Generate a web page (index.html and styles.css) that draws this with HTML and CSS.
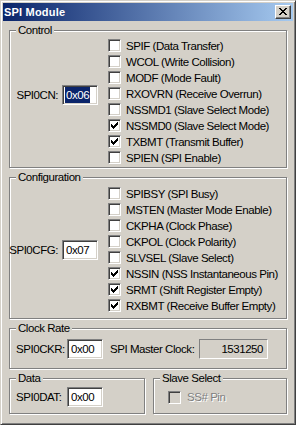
FILE: index.html
```html
<!DOCTYPE html>
<html lang="en">
<head>
    <meta charset="UTF-8">
    <title>SPI Module</title>
    <link rel="stylesheet" href="styles.css">
</head>
<body>
    <div class="window">
        <div class="titlebar">
            <span class="title">SPI Module</span>
            <span class="close-btn">
                <svg width="8" height="7" viewBox="0 0 8 7" shape-rendering="crispEdges">
                    <path d="M0 0h2v1h-2zM6 0h2v1h-2zM1 1h2v1h-2zM5 1h2v1h-2zM2 2h4v1h-4zM3 3h2v1h-2zM2 4h4v1h-4zM1 5h2v1h-2zM5 5h2v1h-2zM0 6h2v1h-2zM6 6h2v1h-2z" fill="#000"/>
                </svg>
            </span>
        </div>

        <div class="dialog">
            <!-- Control register -->
            <div class="group group-control">
                <span class="group-title">Control</span>
                <div class="reg reg-raised">
                    <span class="reg-label">SPI0CN:</span>
                    <span class="edit"><span class="selected">0x06</span></span>
                </div>
                <ul class="bits">
                    <li><span class="check"></span>SPIF (Data Transfer)</li>
                    <li><span class="check"></span>WCOL (Write Collision)</li>
                    <li><span class="check"></span>MODF (Mode Fault)</li>
                    <li><span class="check"></span>RXOVRN (Receive Overrun)</li>
                    <li><span class="check"></span>NSSMD1 (Slave Select Mode)</li>
                    <li><span class="check checked"></span>NSSMD0 (Slave Select Mode)</li>
                    <li><span class="check checked"></span>TXBMT (Transmit Buffer)</li>
                    <li><span class="check"></span>SPIEN (SPI Enable)</li>
                </ul>
            </div>

            <!-- Configuration register -->
            <div class="group group-config">
                <span class="group-title">Configuration</span>
                <div class="reg">
                    <span class="reg-label">SPI0CFG:</span>
                    <span class="edit">0x07</span>
                </div>
                <ul class="bits">
                    <li><span class="check"></span>SPIBSY (SPI Busy)</li>
                    <li><span class="check"></span>MSTEN (Master Mode Enable)</li>
                    <li><span class="check"></span>CKPHA (Clock Phase)</li>
                    <li><span class="check"></span>CKPOL (Clock Polarity)</li>
                    <li><span class="check"></span>SLVSEL (Slave Select)</li>
                    <li><span class="check checked"></span>NSSIN (NSS Instantaneous Pin)</li>
                    <li><span class="check checked"></span>SRMT (Shift Register Empty)</li>
                    <li><span class="check checked"></span>RXBMT (Receive Buffer Empty)</li>
                </ul>
            </div>

            <div class="group group-clock">
                <span class="group-title">Clock Rate</span>
                <span class="reg-label">SPI0CKR:</span>
                <span class="edit">0x00</span>
                <span class="clock-label">SPI Master Clock:</span>
                <span class="readout">1531250</span>
            </div>

            <div class="bottom-row">
                <div class="group group-data">
                    <span class="group-title">Data</span>
                    <span class="reg-label">SPI0DAT:</span>
                    <span class="edit">0x00</span>
                </div>
                <div class="group group-slave">
                    <span class="group-title">Slave Select</span>
                    <span class="check disabled"></span>
                    <span class="disabled-text">SS# Pin</span>
                </div>
            </div>
        </div>
    </div>

    <script>
        // put the tick mark into every checked box
        var tick = '<svg width="7" height="7" viewBox="0 0 7 7" shape-rendering="crispEdges"><path d="M6 0h1v3h-1zM5 1h1v3h-1zM4 2h1v3h-1zM3 3h1v3h-1zM2 4h1v3h-1zM1 3h1v3h-1zM0 2h1v3h-1z" fill="#000"/></svg>';
        document.querySelectorAll('.check.checked').forEach(function (box) {
            box.innerHTML = tick;
        });
    </script>
</body>
</html>
```

FILE: styles.css
```css
body {
    margin: 0;
    background-color: #d4d0c8;
    font-family: 'Liberation Sans', Arial, sans-serif;
    font-size: 11.5px;
    letter-spacing: -0.45px;
    color: #000;
}

.window {
    box-sizing: border-box;
    width: 296px;
    height: 425px;
    background-color: #d4d0c8;
    border: 1px solid;
    border-color: #d4d0c8 #404040 #404040 #d4d0c8;
    box-shadow: inset 1px 1px 0 #fff, inset -1px -1px 0 #808080;
    padding: 2px;
}

.titlebar {
    height: 18px;
    display: flex;
    align-items: center;
    justify-content: space-between;
    background: linear-gradient(to right, #0a246a, #a6caf0);
    padding: 0 2px 0 1px;
}

.title {
    color: #fff;
    font-weight: bold;
    font-size: 11px;
    letter-spacing: 0.2px;
}

.close-btn {
    box-sizing: border-box;
    width: 16px;
    height: 14px;
    display: flex;
    align-items: center;
    justify-content: center;
    background-color: #d4d0c8;
    border: 1px solid;
    border-color: #fff #404040 #404040 #fff;
    box-shadow: inset -1px -1px 0 #808080;
    padding: 0 1px 1px 0;
}

.dialog {
    padding: 9px 6px 0 6px;
}

/* etched frame */
.group {
    position: relative;
    box-sizing: border-box;
    border: 1px solid #808080;
    box-shadow: inset 1px 1px 0 #fff, 1px 1px 0 #fff;
    margin-bottom: 9px;
}

.group-title {
    position: absolute;
    top: -7px;
    left: 6px;
    padding: 0 2px 0 2px;
    background-color: #d4d0c8;
    line-height: 13px;
}

.group-control,
.group-config {
    display: flex;
    align-items: flex-start;
}

.group-control {
    height: 138px;
    padding-top: 7px;
}

.group-config {
    height: 142px;
    padding-top: 8px;
}

.reg {
    width: 88px;
    height: 128px;
    display: flex;
    align-items: center;
    justify-content: flex-end;
    gap: 4px;
    margin-right: 10px;
}

.reg-raised {
    box-sizing: border-box;
    padding-bottom: 15px;
}

.reg-label,
.clock-label {
    white-space: nowrap;
}

.bits {
    list-style: none;
    margin: 0;
    padding: 0;
}

.bits li {
    height: 16px;
    line-height: 16px;
    display: flex;
    align-items: flex-start;
    white-space: nowrap;
}

.check {
    box-sizing: border-box;
    width: 13px;
    height: 13px;
    margin: 1px 5px 0 0;
    display: flex;
    align-items: center;
    justify-content: center;
    background-color: #fff;
    border: 1px solid;
    border-color: #808080 #fff #fff #808080;
    box-shadow: inset 1px 1px 0 #404040, inset -1px -1px 0 #d4d0c8;
    flex-shrink: 0;
}

.check.disabled {
    background-color: #d4d0c8;
}

.edit {
    box-sizing: border-box;
    width: 36px;
    height: 20px;
    display: flex;
    align-items: center;
    padding: 0 3px;
    background-color: #fff;
    border: 1px solid;
    border-color: #808080 #fff #fff #808080;
    box-shadow: inset 1px 1px 0 #404040, inset -1px -1px 0 #d4d0c8;
    line-height: 14px;
    flex-shrink: 0;
}

.selected {
    background-color: #0a246a;
    color: #fff;
    margin-left: -1px;
    padding: 1px;
}

.group-clock {
    height: 41px;
    display: flex;
    align-items: center;
    padding: 1px 6px 0 6px;
}

.group-clock .reg-label,
.group-data .reg-label {
    width: 47px;
    margin-right: 4px;
}

.clock-label {
    width: 83px;
    margin: 0 6px 0 7px;
}

.readout {
    box-sizing: border-box;
    width: 69px;
    height: 20px;
    display: flex;
    align-items: center;
    justify-content: flex-end;
    padding-right: 4px;
    border: 1px solid;
    border-color: #808080 #fff #fff #808080;
}

.bottom-row {
    display: flex;
    gap: 8px;
}

.group-data,
.group-slave {
    height: 36px;
    display: flex;
    align-items: center;
    padding: 2px 6px 0 6px;
}

.group-data {
    width: 136px;
}

.group-slave {
    width: 134px;
    padding-left: 14px;
}

.group-slave .check {
    margin: 0 6px 0 0;
}

.disabled-text {
    color: #808080;
    text-shadow: 1px 1px 0 #fff;
}
```
